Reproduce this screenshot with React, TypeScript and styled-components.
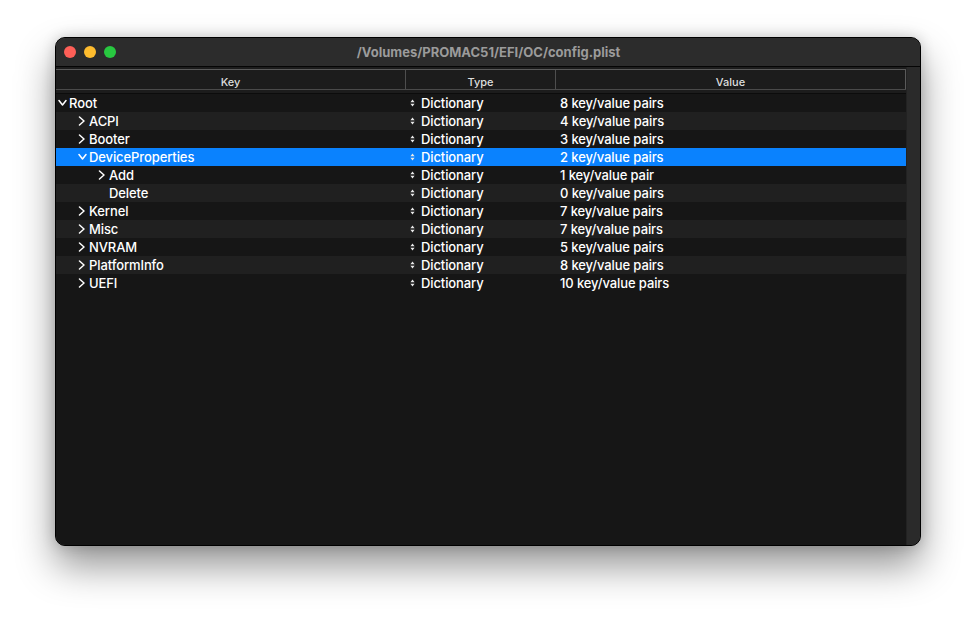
import React from "react";
import styled, { createGlobalStyle } from "styled-components";

const Global = createGlobalStyle`
  html, body { margin: 0; padding: 0; background: #ffffff; }
  body { font-family: Inter, "Noto Sans", "Liberation Sans", sans-serif; -webkit-font-smoothing: antialiased; }
`;

const Page = styled.div`
  width: 977px;
  height: 620px;
  padding: 37px 0 0 55px;
  box-sizing: border-box;
`;

const Window = styled.div`
  width: 866px;
  height: 509px;
  box-sizing: border-box;
  border-radius: 10px;
  border: 1px solid #000;
  background: #161616;
  box-shadow: inset 0 0 0 1px #555, 0 20px 38px rgba(0, 0, 0, 0.42), 0 0 14px rgba(0, 0, 0, 0.18);
  overflow: hidden;
  display: flex;
  flex-direction: column;
`;

const TitleBar = styled.div`
  height: 29px;
  flex: none;
  background: #2c2c2c;
  border-bottom: 1px solid #050505;
  box-sizing: border-box;
  display: flex;
  align-items: center;
  position: relative;
  padding-left: 8px;
`;

const Lights = styled.div`
  display: flex;
  gap: 8px;
  position: relative;
  z-index: 1;
`;

const Light = styled.span<{ $c: string }>`
  width: 12px;
  height: 12px;
  border-radius: 50%;
  background: ${(p) => p.$c};
`;

const Title = styled.div`
  position: absolute;
  left: 0;
  right: 0;
  top: 0;
  bottom: 0;
  display: flex;
  align-items: center;
  justify-content: center;
  font-size: 13px;
  font-weight: 700;
  color: #9b9b9b;
  padding-left: 1px;
`;

const Body = styled.div`
  flex: 1;
  display: flex;
  min-height: 0;
`;

const Table = styled.div`
  flex: 1;
  display: flex;
  flex-direction: column;
  background: #161616;
`;

const HeaderWrap = styled.div`
  background: #1c1c1c;
  padding-top: 2px;
  padding-bottom: 3px;
  border-bottom: 1px solid #0c0c0c;
`;

const Header = styled.div`
  display: grid;
  grid-template-columns: 350px 150px 350px;
  height: 21px;
  box-sizing: border-box;
  border-top: 1px solid #5a5a5a;
  border-bottom: 1px solid #4a4a4a;
`;

const HeadCell = styled.div<{ $last?: boolean }>`
  display: flex;
  align-items: center;
  justify-content: center;
  padding-top: 4px;
  font-size: 11px;
  font-weight: 500;
  color: #dedede;
  border-right: 1px solid ${(p) => (p.$last ? "#5a5a5a" : "#4e4e4e")};
`;

const Row = styled.div<{ $alt: boolean; $sel: boolean }>`
  display: grid;
  grid-template-columns: 350px 150px 350px;
  height: 18px;
  background: ${(p) => (p.$sel ? "#0a82fe" : p.$alt ? "#202020" : "#161616")};
  color: #ffffff;
  font-size: 13px;
  font-weight: 500;
  letter-spacing: -0.1px;
  line-height: 18px;
`;

const KeyCell = styled.div<{ $level: number }>`
  display: flex;
  align-items: center;
  padding-left: ${(p) => 2 + p.$level * 20}px;
`;

const Disclosure = styled.span`
  width: 11px;
  flex: none;
  display: flex;
  align-items: center;
  justify-content: flex-start;
`;

const TypeCell = styled.div`
  display: flex;
  align-items: center;
  padding-left: 4px;
`;

const Stepper = styled.span`
  width: 11px;
  flex: none;
  display: flex;
  align-items: center;
`;

const ValueCell = styled.div`
  display: flex;
  align-items: center;
  padding-left: 4px;
`;

const Scroller = styled.div`
  width: 14px;
  flex: none;
  background: #2a2a2a;
  border-left: 1px solid #222;
`;

const ChevronRight = () => (
  <svg width="8" height="10" viewBox="0 0 8 10">
    <path d="M1.5 1 L6 5 L1.5 9" fill="none" stroke="#fff" strokeWidth="1.5" strokeLinecap="round" strokeLinejoin="round" />
  </svg>
);

const ChevronDown = () => (
  <svg width="9" height="8" viewBox="0 0 9 8">
    <path d="M1 1.5 L4.5 6 L8 1.5" fill="none" stroke="#fff" strokeWidth="1.5" strokeLinecap="round" strokeLinejoin="round" />
  </svg>
);

const UpDown = () => (
  <svg width="5" height="8" viewBox="0 0 5 8">
    <path d="M2.5 0.5 L4.6 3.2 L0.4 3.2 Z M2.5 7.5 L4.6 4.8 L0.4 4.8 Z" fill="#e8e8e8" />
  </svg>
);

type Item = { key: string; level: number; exp?: "open" | "closed"; value: string };

const items: Item[] = [
  { key: "Root", level: 0, exp: "open", value: "8 key/value pairs" },
  { key: "ACPI", level: 1, exp: "closed", value: "4 key/value pairs" },
  { key: "Booter", level: 1, exp: "closed", value: "3 key/value pairs" },
  { key: "DeviceProperties", level: 1, exp: "open", value: "2 key/value pairs" },
  { key: "Add", level: 2, exp: "closed", value: "1 key/value pair" },
  { key: "Delete", level: 2, value: "0 key/value pairs" },
  { key: "Kernel", level: 1, exp: "closed", value: "7 key/value pairs" },
  { key: "Misc", level: 1, exp: "closed", value: "7 key/value pairs" },
  { key: "NVRAM", level: 1, exp: "closed", value: "5 key/value pairs" },
  { key: "PlatformInfo", level: 1, exp: "closed", value: "8 key/value pairs" },
  { key: "UEFI", level: 1, exp: "closed", value: "10 key/value pairs" },
];

export default function App() {
  return (
    <Page>
      <Global />
      <Window>
        <TitleBar>
          <Lights>
            <Light $c="#fe5f57" />
            <Light $c="#febc2e" />
            <Light $c="#28c840" />
          </Lights>
          <Title>/Volumes/PROMAC51/EFI/OC/config.plist</Title>
        </TitleBar>
        <Body>
          <Table>
            <HeaderWrap>
              <Header>
                <HeadCell>Key</HeadCell>
                <HeadCell>Type</HeadCell>
                <HeadCell $last>Value</HeadCell>
              </Header>
            </HeaderWrap>
            {items.map((it, i) => (
              <Row key={it.key} $alt={i % 2 === 1} $sel={it.key === "DeviceProperties"}>
                <KeyCell $level={it.level}>
                  <Disclosure>
                    {it.exp === "open" ? <ChevronDown /> : it.exp === "closed" ? <ChevronRight /> : null}
                  </Disclosure>
                  {it.key}
                </KeyCell>
                <TypeCell>
                  <Stepper>
                    <UpDown />
                  </Stepper>
                  Dictionary
                </TypeCell>
                <ValueCell>{it.value}</ValueCell>
              </Row>
            ))}
          </Table>
          <Scroller />
        </Body>
      </Window>
    </Page>
  );
}
